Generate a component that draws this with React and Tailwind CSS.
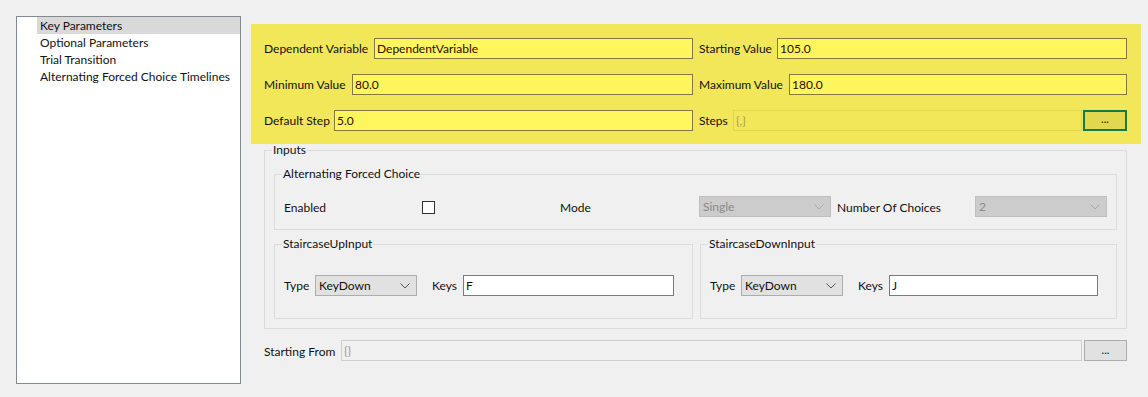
import React from "react";

const font = { fontFamily: "Lato, 'Segoe UI', sans-serif" };

const Chevron = ({ color }) => (
  <svg width="10" height="6" viewBox="0 0 10 6" className="shrink-0">
    <polyline points="0.5,0.5 5,5 9.5,0.5" fill="none" stroke={color} strokeWidth="1" />
  </svg>
);

const YellowRow = ({ label, labelW, value }) => (
  <div className="flex items-center h-[21px]">
    <span className={`${labelW} shrink-0 text-[12px] text-[#111] pt-[1px]`}>{label}</span>
    <div className="flex-1 h-full border border-[#7f7a3e] bg-[#fff55d] flex items-center px-[2px] text-[12px] text-[#2a0a00]">
      {value}
    </div>
  </div>
);

const Combo = ({ value, width, disabled }) => (
  <div
    className={`${width} h-[21px] shrink-0 flex items-center justify-between pl-[3px] pr-[6px] border text-[12px] ${
      disabled
        ? "bg-[#cccccc] border-[#bfbfbf] text-[#8a8a8a]"
        : "bg-[#e1e1e1] border-[#adadad] text-[#111]"
    }`}
  >
    <span>{value}</span>
    <Chevron color={disabled ? "#a8a8a8" : "#555"} />
  </div>
);

const Group = ({ title, className, children, contentClass }) => (
  <fieldset className={`border border-[#dcdcdc] ${className}`}>
    <legend className="-ml-[2px] px-[1px] text-[12px] leading-[12px] text-[#111]">{title}</legend>
    <div className={contentClass}>{children}</div>
  </fieldset>
);

const KeyRow = ({ keyValue }) => (
  <div className="flex items-center h-[21px]">
    <span className="w-[31px] shrink-0 text-[12px] text-[#111] pt-[1px]">Type</span>
    <Combo value="KeyDown" width="w-[102px]" />
    <span className="ml-[15px] w-[31px] shrink-0 text-[12px] text-[#111] pt-[1px]">Keys</span>
    <div className="flex-1 h-[21px] bg-white border border-[#7a7a7a] flex items-center px-[2px] text-[12px] text-[#111]">
      {keyValue}
    </div>
  </div>
);

const App = () => {
  const items = [
    "Key Parameters",
    "Optional Parameters",
    "Trial Transition",
    "Alternating Forced Choice Timelines",
  ];

  return (
    <main className="w-[1148px] h-[397px] bg-[#f0f0f0] flex pt-[16px] pl-[16px]" style={font}>
      <div className="w-[225px] h-[368px] shrink-0 border border-[#828790] bg-white">
        {items.map((item, i) => (
          <div
            key={item}
            className={`ml-[20px] h-[17px] flex items-center pl-[3px] text-[12px] text-[#111] ${
              i === 0 ? "bg-[#d9d9d9]" : ""
            }`}
          >
            {item}
          </div>
        ))}
      </div>

      <div className="ml-[10px] mt-[8px] w-[890px] flex flex-col">
        <div className="h-[120px] bg-[#f1e758] pt-[14px] pl-[13px] pr-[14px]">
          <div className="grid grid-cols-[429px_428px] gap-x-[6px] gap-y-[15px]">
            <YellowRow label="Dependent Variable" labelW="w-[110px]" value="DependentVariable" />
            <YellowRow label="Starting Value" labelW="w-[78px]" value="105.0" />
            <YellowRow label="Minimum Value" labelW="w-[88px]" value="80.0" />
            <YellowRow label="Maximum Value" labelW="w-[90px]" value="180.0" />
            <YellowRow label="Default Step" labelW="w-[70px]" value="5.0" />
            <div className="flex items-center h-[21px]">
              <span className="w-[34px] shrink-0 text-[12px] text-[#111] pt-[1px]">Steps</span>
              <div className="flex-1 h-full border border-[#e0d64f] bg-[#f1e758] flex items-center px-[2px] text-[12px] text-[#a09c5c]">
                {"{,}"}
              </div>
              <button className="ml-[1px] w-[44px] h-[21px] shrink-0 bg-[#e2d84f] border-2 border-[#167a47] text-[11px] leading-none text-[#111] flex items-end justify-center pb-[5px]">
                ...
              </button>
            </div>
          </div>
        </div>

        <div className="mx-[13px] w-[863px]">
          <Group title="Inputs" className="pl-[9px] pr-[9px] pb-[9px]" contentClass="pt-[12px]">
            <Group
              title="Alternating Forced Choice"
              className="pl-[9px] pr-[9px] pb-[12px]"
              contentClass="pt-[16px]"
            >
              <div className="flex items-center h-[21px] text-[12px] text-[#111]">
                <span className="w-[138px] shrink-0 pt-[2px]">Enabled</span>
                <div className="w-[138px] shrink-0 flex items-center pt-[1px]">
                  <div className="w-[13px] h-[13px] bg-white border border-[#333]" />
                </div>
                <span className="w-[139px] shrink-0 pt-[2px]">Mode</span>
                <Combo value="Single" width="w-[132px]" disabled />
                <span className="ml-[6px] w-[138px] shrink-0 pt-[2px]">Number Of Choices</span>
                <Combo value="2" width="w-[132px]" disabled />
              </div>
            </Group>

            <div className="flex gap-[7px] mt-[8px]">
              <Group
                title="StaircaseUpInput"
                className="w-[419px] shrink-0 pl-[9px] pr-[18px] pb-[22px]"
                contentClass="pt-[25px]"
              >
                <KeyRow keyValue="F" />
              </Group>
              <Group
                title="StaircaseDownInput"
                className="flex-1 pl-[9px] pr-[18px] pb-[22px]"
                contentClass="pt-[25px]"
              >
                <KeyRow keyValue="J" />
              </Group>
            </div>
          </Group>

          <div className="flex items-center h-[21px] mt-[11px]">
            <span className="w-[77px] shrink-0 text-[12px] text-[#111] pt-[2px]">Starting From</span>
            <div className="flex-1 h-full border border-[#cfcfcf] bg-[#f0f0f0] flex items-center px-[2px] text-[12px] text-[#9a9a9a]">
              {"{}"}
            </div>
            <button className="ml-[2px] w-[43px] h-[21px] shrink-0 bg-[#e1e1e1] border border-[#adadad] text-[11px] leading-none text-[#111] flex items-end justify-center pb-[5px]">
              ...
            </button>
          </div>
        </div>
      </div>
    </main>
  );
};

export default App;
